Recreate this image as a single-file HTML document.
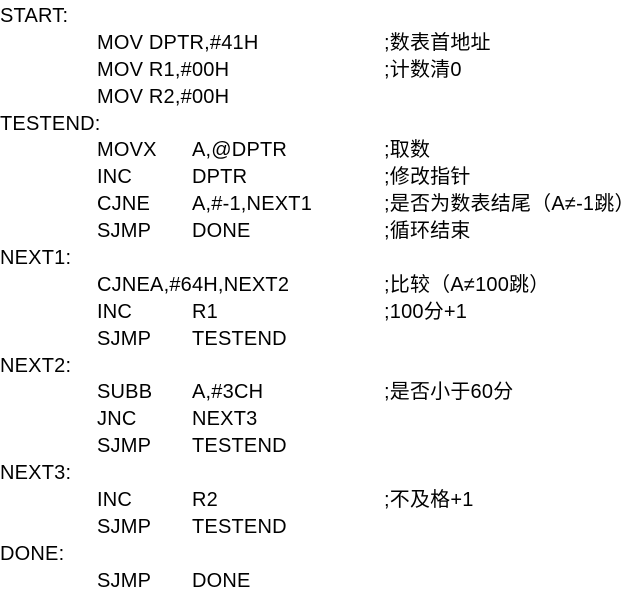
<!DOCTYPE html>
<html><head><meta charset="utf-8"><style>
html,body{margin:0;padding:0;background:#fff;width:638px;height:605px;overflow:hidden}
body{font-family:"Liberation Sans","Noto Sans CJK SC",sans-serif;font-size:20px;letter-spacing:0.2px;color:#000;padding-top:3px}
.l{position:relative;height:26.9px;line-height:26.9px;white-space:pre}
.l span{position:absolute;top:0}
.a{left:0}.b{left:97px}.c{left:192px}.d{left:384px}
</style></head><body>
<div class="l"><span class="a">START:</span></div>
<div class="l"><span class="b">MOV DPTR,#41H</span><span class="d">;数表首地址</span></div>
<div class="l"><span class="b">MOV R1,#00H</span><span class="d">;计数清0</span></div>
<div class="l"><span class="b">MOV R2,#00H</span></div>
<div class="l"><span class="a">TESTEND:</span></div>
<div class="l"><span class="b">MOVX</span><span class="c">A,@DPTR</span><span class="d">;取数</span></div>
<div class="l"><span class="b">INC</span><span class="c">DPTR</span><span class="d">;修改指针</span></div>
<div class="l"><span class="b">CJNE</span><span class="c">A,#-1,NEXT1</span><span class="d">;是否为数表结尾（A≠-1跳）</span></div>
<div class="l"><span class="b">SJMP</span><span class="c">DONE</span><span class="d">;循环结束</span></div>
<div class="l"><span class="a">NEXT1:</span></div>
<div class="l"><span class="b">CJNEA,#64H,NEXT2</span><span class="d">;比较（A≠100跳）</span></div>
<div class="l"><span class="b">INC</span><span class="c">R1</span><span class="d">;100分+1</span></div>
<div class="l"><span class="b">SJMP</span><span class="c">TESTEND</span></div>
<div class="l"><span class="a">NEXT2:</span></div>
<div class="l"><span class="b">SUBB</span><span class="c">A,#3CH</span><span class="d">;是否小于60分</span></div>
<div class="l"><span class="b">JNC</span><span class="c">NEXT3</span></div>
<div class="l"><span class="b">SJMP</span><span class="c">TESTEND</span></div>
<div class="l"><span class="a">NEXT3:</span></div>
<div class="l"><span class="b">INC</span><span class="c">R2</span><span class="d">;不及格+1</span></div>
<div class="l"><span class="b">SJMP</span><span class="c">TESTEND</span></div>
<div class="l"><span class="a">DONE:</span></div>
<div class="l"><span class="b">SJMP</span><span class="c">DONE</span></div>
</body></html>
